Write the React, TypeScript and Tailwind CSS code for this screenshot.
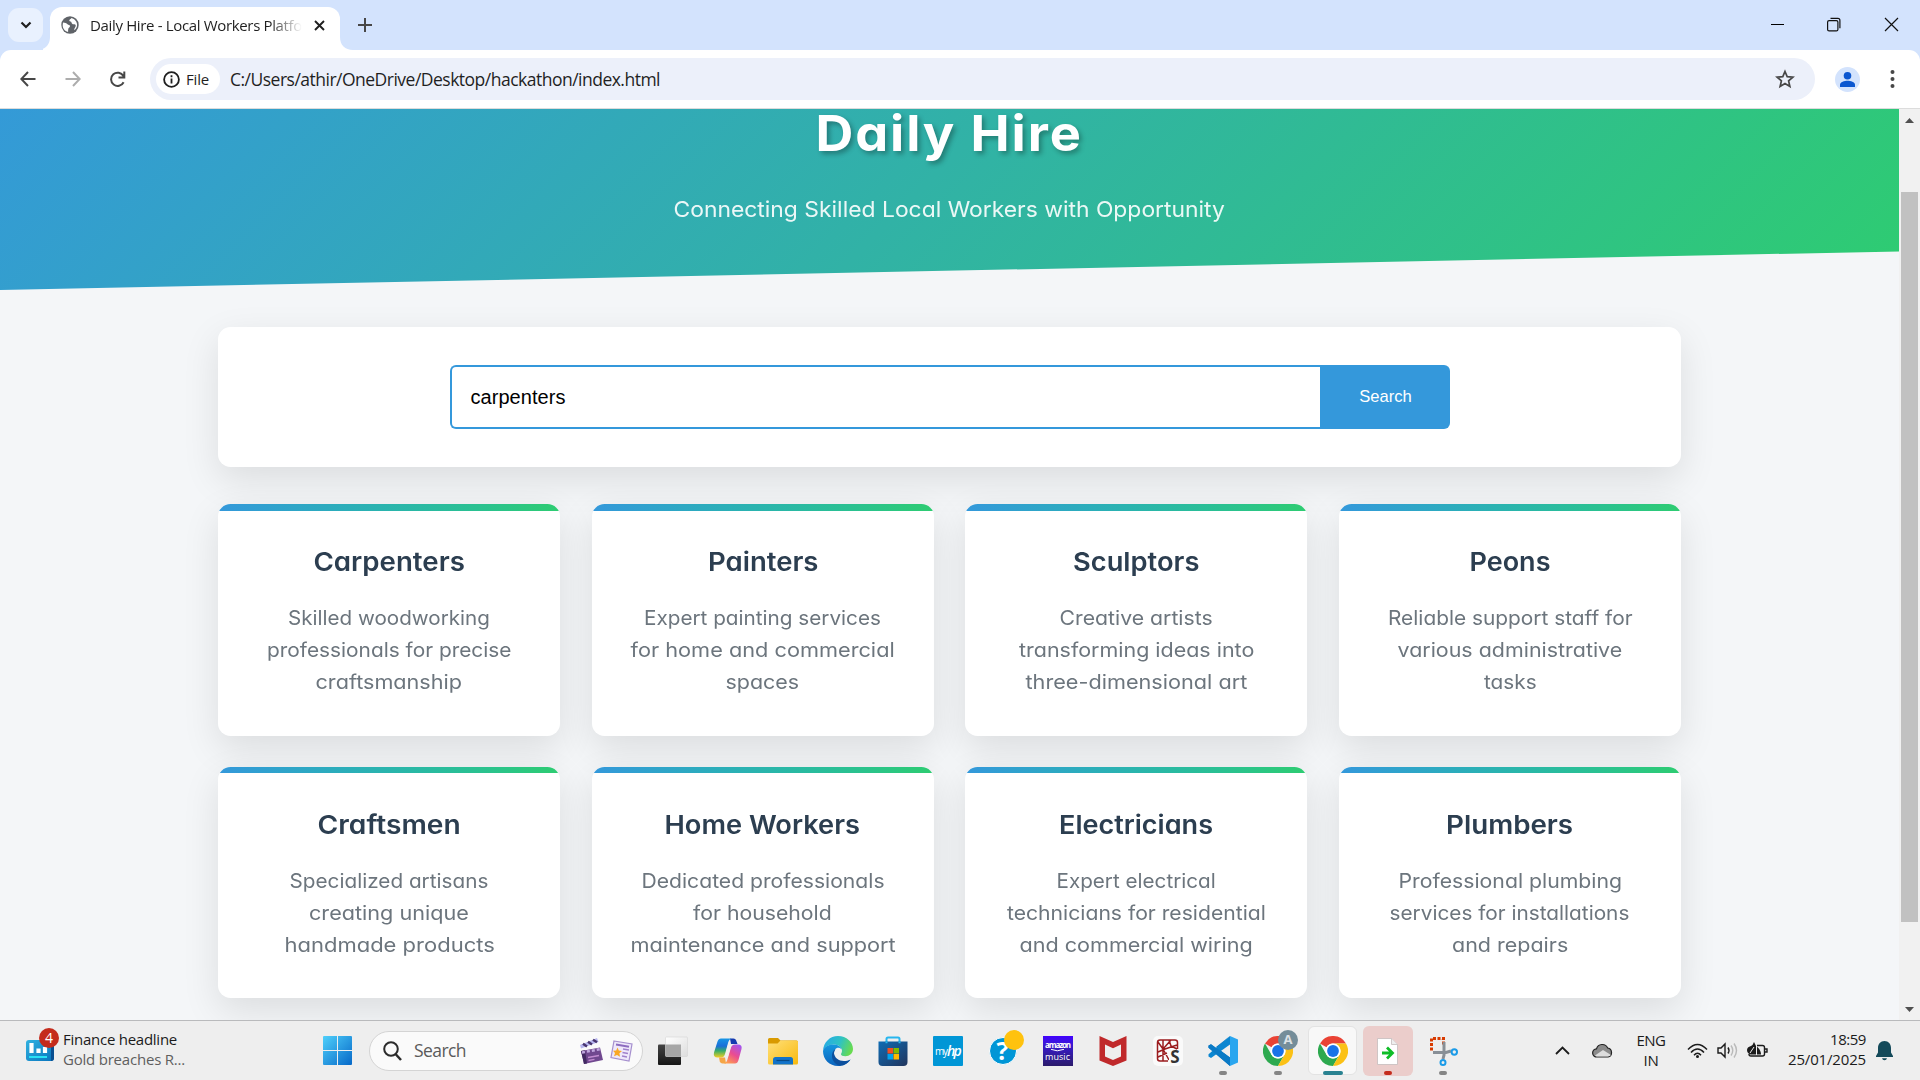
import { useLayoutEffect, useRef, useState, type ReactNode } from "react";

/** A single line of text tracked so that it spans the given width. */
function Fit({ w, children, className = "" }: { w: number; children: string; className?: string }) {
  const ref = useRef<HTMLSpanElement>(null);
  const [spacing, setSpacing] = useState(0);
  useLayoutEffect(() => {
    if (!ref.current) return;
    const natural = ref.current.getBoundingClientRect().width - spacing * children.length;
    setSpacing((w - natural) / children.length);
  }, [w, children]);
  return (
    <span ref={ref} className={`inline-block whitespace-nowrap ${className}`} style={{ letterSpacing: `${spacing}px` }}>
      {children}
    </span>
  );
}

/** A single line of text whose letters are widened so that it spans the given width. */
function Stretch({ w, children, className = "" }: { w: number; children: string; className?: string }) {
  const ref = useRef<HTMLSpanElement>(null);
  const [scale, setScale] = useState(1);
  useLayoutEffect(() => {
    if (ref.current) setScale(w / ref.current.offsetWidth);
  }, [w, children]);
  return (
    <span ref={ref} className={`inline-block whitespace-nowrap ${className}`} style={{ transform: `scaleX(${scale})` }}>
      {children}
    </span>
  );
}

type Line = [string, number];
const services: { title: Line; lines: Line[] }[] = [
  { title: ["Carpenters", 151], lines: [["Skilled woodworking", 202], ["professionals for precise", 245], ["craftsmanship", 147]] },
  { title: ["Painters", 110], lines: [["Expert painting services", 237], ["for home and commercial", 264], ["spaces", 74]] },
  { title: ["Sculptors", 126], lines: [["Creative artists", 153], ["transforming ideas into", 235], ["three-dimensional art", 222]] },
  { title: ["Peons", 81], lines: [["Reliable support staff for", 245], ["various administrative", 225], ["tasks", 53]] },
  { title: ["Craftsmen", 143], lines: [["Specialized artisans", 199], ["creating unique", 160], ["handmade products", 210]] },
  { title: ["Home Workers", 196], lines: [["Dedicated professionals", 243], ["for household", 139], ["maintenance and support", 265]] },
  { title: ["Electricians", 154], lines: [["Expert electrical", 159], ["technicians for residential", 259], ["and commercial wiring", 233]] },
  { title: ["Plumbers", 127], lines: [["Professional plumbing", 224], ["services for installations", 240], ["and repairs", 116]] },
];

function TabStrip() {
  return (
    <div className="flex h-[50px] shrink-0 bg-[#d3e3fd]">
      <div className="mt-2 ml-2 flex h-[34px] w-[35px] items-center justify-center rounded-[11px] bg-[#e9f1fe]">
        <svg width="12" height="8" viewBox="0 0 12 8" fill="none" stroke="#1f1f1f" strokeWidth="2.2"><path d="M1.500 1.500 6 6l4.500-4.500" /></svg>
      </div>
      <div className="flex w-[7px] items-end overflow-hidden">
        <svg className="-ml-[6px] shrink-0" width="13" height="13" viewBox="0 0 13 13"><path d="M13 0v13H0C8 13 13 8 13 0Z" fill="#fff" /></svg>
      </div>
      <div className="mt-[7px] flex h-[43px] w-[290px] items-center rounded-t-[12px] bg-white pb-[7px] pl-[11px]">
        <svg width="18" height="18" viewBox="0 0 18 18">
          <circle cx="9" cy="9" r="8.700" fill="#5f6368" />
          <path d="M2 6.500c2 .5 3.500.5 4.500 1.700.9 1 2.300.5 2.500 1.800.2 1.500-1.500 1.300-1.700 2.700-.1 1.200-.3 2.300-.2 3.300C3.500 15 1.500 12 1.700 9Z" fill="#fff" />
          <path d="M10.500 2c-.6 1.200-2.500 1.500-2.200 2.700.3 1 2 .6 2.200 1.700.2 1.200 1.300 2.100 2.700 1.800 1.100-.2 1.600.7 1.500 1.700-.2 1.700-1.700 2.300-1.500 4.300 1.700-1.200 2.900-3 2.900-5.200 0-3.200-2.300-6.100-5.600-7Z" fill="#fff" />
        </svg>
        <div className="ml-[11px] w-[214px] bg-gradient-to-r from-[#1f1f1f] from-84% to-transparent to-99% bg-clip-text text-[15px] leading-5 text-transparent">
          <Fit w={212}>Daily Hire - Local Workers Platfo</Fit>
        </div>
        <svg className="ml-[10px]" width="11" height="11" viewBox="0 0 11 11" stroke="#1f1f1f" strokeWidth="1.900"><path d="m1 1 9 9M10 1l-9 9" /></svg>
      </div>
      <div className="flex w-[14px] items-end">
        <svg width="13" height="13" viewBox="0 0 13 13"><path d="M0 0v13h13C5 13 0 8 0 0Z" fill="#fff" /></svg>
      </div>
      <svg className="mt-[18px] ml-1" width="14" height="14" viewBox="0 0 14 14" stroke="#474747" strokeWidth="2"><path d="M7 0v14M0 7h14" /></svg>
      <div className="mt-[17px] mr-[21px] ml-auto flex gap-[43px]">
        <svg width="14" height="15" viewBox="0 0 14 15" stroke="#000"><path d="M1 7.500h13" /></svg>
        <svg width="14" height="15" viewBox="0 0 14 15" fill="none" stroke="#111" strokeWidth="1.200"><rect x=".6" y="3.600" width="10.300" height="10.300" rx="1.500" /><path d="M3.500 1.400h7.400q2 0 2 2v7.800" /></svg>
        <svg width="15" height="15" viewBox="0 0 15 15" stroke="#111" strokeWidth="1.200"><path d="m1 1 13 13M14 1 1 14" /></svg>
      </div>
    </div>
  );
}

function Toolbar() {
  return (
    <div className="h-[59px] shrink-0 bg-[#d3e3fd]">
      <div className="flex h-full items-center rounded-t-[11px] border-b border-[#dcdcdc] bg-white pl-5">
        <svg width="16" height="16" viewBox="0 0 16 16" fill="none" stroke="#474747" strokeWidth="2"><path d="M15.500 8H1.500M8 1 1.300 8 8 15" /></svg>
        <svg className="ml-[29px]" width="16" height="16" viewBox="0 0 16 16" fill="none" stroke="#adadad" strokeWidth="2"><path d="M.5 8h14M8 1l6.700 7L8 15" /></svg>
        <svg className="ml-7" width="17" height="17" viewBox="0 0 17 17" fill="none" stroke="#474747" strokeWidth="2"><path d="M14.600 11.200A6.600 6.600 0 1 1 14.400 5M15.300.5v6H9.500" /></svg>
        <div className="ml-6 flex h-[42px] w-[1665px] items-center rounded-full bg-[#ecf0fa] pl-[6px]">
          <div className="flex h-[30px] w-16 items-center rounded-full bg-white pl-[7px]">
            <svg width="17" height="17" viewBox="0 0 17 17" fill="none" stroke="#1f1f1f" strokeWidth="1.800"><circle cx="8.500" cy="8.500" r="7.400" /><path d="M8.500 7.500v5M8.500 4.300v2" /></svg>
            <span className="ml-[6px] pb-px text-[15px] leading-5 text-[#1f1f1f]"><Fit w={23}>File</Fit></span>
          </div>
          <span className="ml-[10px] text-[17.500px] leading-6 text-[#1f1f1f]"><Fit w={430}>C:/Users/athir/OneDrive/Desktop/hackathon/index.html</Fit></span>
          <svg className="mr-5 ml-auto" width="20" height="20" viewBox="0 0 20 20" fill="none" stroke="#474747" strokeWidth="1.700"><path d="m10 2.500 2.200 5.200 5.700.5-4.300 3.700 1.300 5.600-4.900-3-4.900 3 1.300-5.600L2.100 8.200l5.700-.5Z" /></svg>
        </div>
        <svg className="ml-5" width="25" height="25" viewBox="0 0 25 25"><circle cx="12.500" cy="12.500" r="12.500" fill="#d3e3fd" /><circle cx="12.500" cy="8.800" r="3.800" fill="#0b57d0" /><path d="M5 20v-2.300c0-2.700 4.500-4 7.500-4s7.500 1.300 7.500 4V20Z" fill="#0b57d0" /></svg>
        <svg className="ml-[30px]" width="5" height="18" viewBox="0 0 5 18" fill="#474747"><circle cx="2.500" cy="2" r="2" /><circle cx="2.500" cy="9" r="2" /><circle cx="2.500" cy="16" r="2" /></svg>
      </div>
    </div>
  );
}

function Page() {
  return (
    <div className="flex h-[911px] shrink-0 overflow-hidden bg-[#f4f6f8]">
      <div className="w-[1899px] [font-family:Inter,sans-serif] [font-feature-settings:'cv11']">
        <header className="-mt-[76px] flex h-[257px] flex-col items-center bg-[linear-gradient(135deg,#3498db,#2ecc71)] pt-[76px] text-white [clip-path:polygon(0_0,100%_0,100%_85%,0_100%)]">
          <h1 className="text-[49px] leading-[50px] font-bold [text-shadow:2.5px_2.5px_5px_rgba(0,0,0,0.3)]"><Stretch w={267} className="tracking-[1.800px]">Daily Hire</Stretch></h1>
          <p className="mt-[33px] text-[22px] leading-[35px] text-white/90"><Stretch w={551}>Connecting Skilled Local Workers with Opportunity</Stretch></p>
        </header>
        <main className="mx-auto w-[1463px] pt-[37px]">
          <section className="flex h-[140px] items-center justify-center rounded-[12.500px] bg-white shadow-[0_12.5px_37.5px_rgba(0,0,0,0.1)]">
            <div className="flex h-16 w-[1000px] font-['Liberation_Sans',sans-serif]">
              <div className="flex w-[870px] items-center rounded-l-[6px] border-2 border-r-0 border-[#3498db] pl-[19px] text-[20px] text-black"><Fit w={95}>carpenters</Fit></div>
              <div className="flex w-[130px] items-center justify-center rounded-r-[6px] bg-[#3498db] pl-[2px] text-[16.600px] text-white">Search</div>
            </div>
          </section>
          <section className="mt-[37.300px] grid grid-cols-4 gap-[31.250px]">
            {services.map(({ title, lines }) => (
              <article key={title[0]} className="flex h-[231.400px] flex-col items-center overflow-hidden rounded-[12.500px] bg-white shadow-[0_12.5px_37.5px_rgba(0,0,0,0.1)]">
                <div className="h-[6.250px] w-full shrink-0 bg-linear-to-r from-[#3498db] to-[#2ecc71]" />
                <h3 className="mt-[30.500px] text-[26px] leading-[41.600px] font-semibold text-[#2c3e50]"><Stretch w={title[1]}>{title[0]}</Stretch></h3>
                <p className="mt-[19.500px] flex flex-col items-center text-[20px] leading-8 text-[#6c757d]">
                  {lines.map(([text, w]) => <Stretch key={text} w={w}>{text}</Stretch>)}
                </p>
              </article>
            ))}
          </section>
        </main>
      </div>
      <div className="flex w-[21px] flex-col items-center bg-[#f1f1f1] pt-[9px]">
        <svg className="shrink-0" width="9" height="5" viewBox="0 0 9 5"><path d="M4.500 0 9 5H0Z" fill="#505050" /></svg>
        <div className="mt-[69px] h-[730px] w-[17px] shrink-0 bg-[#c1c1c1]" />
        <svg className="mt-[85px] shrink-0" width="9" height="5" viewBox="0 0 9 5"><path d="M0 0h9L4.500 5Z" fill="#505050" /></svg>
      </div>
    </div>
  );
}

function Chrome() {
  return (
    <svg width="30" height="30" viewBox="0 0 30 30">
      <path d="M2 7.500A15 15 0 0 1 28 7.500H15A7.500 7.500 0 0 0 8.500 11.200Z" fill="#ea4335" />
      <path d="M2 7.500A15 15 0 0 0 15 30l6.500-11.200a7.500 7.500 0 0 1-13 0Z" fill="#2da94f" />
      <path d="M28 7.500A15 15 0 0 1 15 30l6.500-11.200A7.500 7.500 0 0 0 15 7.500Z" fill="#fbc116" />
      <circle cx="15" cy="15" r="7.500" fill="#fff" />
      <circle cx="15" cy="15" r="5.900" fill="#1a73e8" />
    </svg>
  );
}

function TaskView() {
  return (
    <svg width="30" height="30" viewBox="0 0 30 30">
      <defs>
        <linearGradient id="tvDark" x2="0" y2="1"><stop stopColor="#444" /><stop offset="1" stopColor="#161616" /></linearGradient>
        <linearGradient id="tvLight" x2="1" y2="1"><stop stopColor="#fff" /><stop offset="1" stopColor="#ddd" /></linearGradient>
      </defs>
      <rect y="8.500" width="23" height="20.500" rx="1" fill="url(#tvDark)" />
      <rect x="7.500" y="1" width="22" height="19.500" rx="1" fill="url(#tvLight)" stroke="#d5d5d5" strokeWidth=".6" />
      <path d="M7.500 8.500H23v12H8.500q-1 0-1-1Z" fill="#a6a6a6" />
    </svg>
  );
}

function Copilot() {
  return (
    <svg width="30" height="28" viewBox="0 0 30 28">
      <defs>
        <linearGradient id="cpA" x2="0" y2="1"><stop stopColor="#1796e6" /><stop offset=".4" stopColor="#1b6fd8" /><stop offset=".65" stopColor="#38ad68" /><stop offset="1" stopColor="#f4cf22" /></linearGradient>
        <linearGradient id="cpB" x1=".8" y1="0" x2=".2" y2="1"><stop stopColor="#a555ee" /><stop offset=".5" stopColor="#ea4c91" /><stop offset="1" stopColor="#ffa14c" /></linearGradient>
      </defs>
      <path d="M17 1.500h3.500q2 0 2.700 2L24.500 7H18Z" fill="#143bb0" />
      <path d="M8 1.500h10q-2 1-2.700 3.500L12 17q-1 3.500-4 3.500H4.500Q0 20.500 1 15.500L4.500 4.500Q5.500 1.500 8 1.500Z" fill="url(#cpA)" />
      <path d="M13 26.500H9.500q-2 0-2.700-2L6 20.500h6Z" fill="#f5a646" />
      <path d="M22 26.500H11q2.500-.5 3.300-3.500L18 10.500Q19 7.500 22 7.500h3q4.500 0 3.500 4.500L25.500 23q-1 3.500-3.500 3.500Z" fill="url(#cpB)" />
      <path d="M14.700 8.500h3.500L15 19.500h-3Z" fill="#f6f0ed" />
    </svg>
  );
}

function Folder() {
  return (
    <svg width="30" height="28" viewBox="0 0 30 28">
      <defs><linearGradient id="fo" x2="1" y2="1"><stop stopColor="#ffe07a" /><stop offset="1" stopColor="#f8b90d" /></linearGradient></defs>
      <path d="M0 2.500Q0 1 1.500 1h8.500l2.500 2.500H28.500Q30 3.500 30 5v8H0Z" fill="#d99a00" />
      <path d="M0 6.500h9.500l3-3h16Q30 3.500 30 5v21q0 1.500-1.500 1.500h-27Q0 27.500 0 26Z" fill="url(#fo)" />
      <path d="M5 27.500V22.500Q5 20 7.500 20h15Q25 20 25 22.500v5Z" fill="#1273c9" />
      <path d="M8.500 23.500h13" stroke="#084a86" strokeWidth="1.200" />
    </svg>
  );
}

function Edge() {
  return (
    <svg width="30" height="30" viewBox="0 0 30 30">
      <defs>
        <linearGradient id="edA" x2="1" y1=".2" y2=".5"><stop stopColor="#25a9e8" /><stop offset=".55" stopColor="#2fc2c3" /><stop offset="1" stopColor="#68db50" /></linearGradient>
        <linearGradient id="edB" x2="0" y2="1"><stop stopColor="#1597df" /><stop offset="1" stopColor="#0b63bd" /></linearGradient>
      </defs>
      <path d="M0 15C.5 6 7 0 15 0c8.500 0 15 6 15 13 0 4.500-3.500 7.200-7.500 7.200-3 0-4.500-1-4.500-2 0-.8 1-1.400 1-3.400C19 11 15 8.500 10.500 8.500 5 8.500 1 11.500 0 15Z" fill="url(#edA)" />
      <path d="M0 15C1 11 5 8.500 10.500 8.500c4 0 7.500 2 8.300 5-1-1.300-2.300-1.800-3.500-1.800-2.800 0-4.300 2.700-4.300 5.800 0 5.500 4.500 8.500 9 8.500 3 0 5.500-1 7.500-2.500C24.500 28 20 30 15 30 6.500 30 0 23.500 0 15Z" fill="url(#edB)" />
      <path d="M12.500 13.200C9.500 14.500 9 18 9 20c0 5.500 4.500 9 8 9.800 4.500-.3 8.500-3 10.500-6.300-2 1-4.500 1.500-6.500 1.500-5.500 0-9.500-3.500-10-7.500 0-1.800.5-3.200 1.500-4.300Z" fill="#0c4f9d" />
    </svg>
  );
}

function Store() {
  return (
    <svg width="30" height="30" viewBox="0 0 30 30">
      <defs><linearGradient id="st" x2="1" y2="1"><stop stopColor="#0f6cb4" /><stop offset="1" stopColor="#22355d" /></linearGradient></defs>
      <path d="M8.500 7V3q0-1.500 1.500-1.500h10q1.500 0 1.500 1.500v4" fill="none" stroke="#27b6ee" strokeWidth="2" />
      <path d="M.5 5.500h29V26q0 4-4 4h-21q-4 0-4-4Z" fill="url(#st)" />
      <path d="M9.500 12H15v5.500H9.500Z" fill="#f25022" /><path d="M15.500 12H21v5.500h-5.500Z" fill="#7fba00" />
      <path d="M9.500 18H15v5.500H9.500Z" fill="#00a4ef" /><path d="M15.500 18H21v5.500h-5.500Z" fill="#ffb900" />
      <path d="M8.500 5.500v1.800M21.500 5.500v1.800" stroke="#27b6ee" strokeWidth="2" />
    </svg>
  );
}

function Badge({ children, className }: { children?: ReactNode; className: string }) {
  return <span className={`absolute flex size-5 items-center justify-center rounded-full text-[13px] leading-none ${className}`}>{children}</span>;
}

function Cell({ children, mark }: { children: ReactNode; mark?: string }) {
  return (
    <div className="relative flex h-[60px] w-[55px] items-center justify-center">
      {children}
      {mark && <span className={`absolute bottom-[6px] h-1 rounded-full ${mark}`} />}
    </div>
  );
}

function Apps() {
  return (
    <div className="ml-[2px] flex">
      <Cell><TaskView /></Cell>
      <Cell><Copilot /></Cell>
      <Cell><Folder /></Cell>
      <Cell><Edge /></Cell>
      <Cell><Store /></Cell>
      <Cell>
        <div className="flex size-[30px] items-center justify-center rounded-[1px] bg-[#0096d6] text-white">
          <span className="text-[10px] leading-none"><Fit w={12}>my</Fit></span>
          <span className="text-[14px] leading-none font-semibold italic"><Fit w={13}>hp</Fit></span>
        </div>
      </Cell>
      <Cell>
        <div className="flex size-7 items-center justify-center rounded-full border border-white bg-[#0096d6] text-[25px] leading-none font-bold text-white">?</div>
        <Badge className="top-[9px] left-[29px] bg-[#ffc20e]" />
      </Cell>
      <Cell>
        <div className="flex size-[30px] flex-col items-center bg-linear-to-b from-[#4100ff] to-[#2b1a6b] pt-1 text-white">
          <span className="text-[8px] leading-[9px] font-bold"><Fit w={25}>amazon</Fit></span>
          <svg width="16" height="3" viewBox="0 0 16 3" fill="none" stroke="#fff"><path d="M1 .3q6 3 13 0" /></svg>
          <span className="text-[9px] leading-[9px]"><Fit w={25}>music</Fit></span>
        </div>
      </Cell>
      <Cell>
        <svg width="28" height="30" viewBox="0 0 28 30"><path d="m.5 0 13.500 6L27.500 0v24.500L14 30 .5 24.500Z" fill="#c0292b" /><path d="m6 8.500 8 3.700 8-3.700v12L14 24l-8-3.500Z" fill="#eee" /></svg>
      </Cell>
      <Cell>
        <div className="relative size-[30px] rounded-[5px] bg-[#fafafa]">
          <svg width="30" height="30" viewBox="0 0 30 30" fill="none" stroke="#9b1c1f" strokeWidth="1.500"><path d="M15 25H7q-2.500 0-2.500-2.500V6.500Q4.500 4 7 4h15q2.500 0 2.500 2.500V13M10 4v21M5 6l5 7 8-9M5 16l7-3 12-4M10 13l6 11M5 21l9-4M16 4l2 6 6 3" /></svg>
          <span className="absolute right-[3px] bottom-[3px] bg-[#fafafa] pl-px text-[17px] leading-[13px] font-bold text-[#333]">S</span>
        </div>
      </Cell>
      <Cell mark="w-2 bg-[#858585]">
        <svg width="30" height="30" viewBox="0 0 30 30">
          <path d="M22 0 8.500 12.500 3 8.300.5 9.600v2.200L22 30v-8.500L8 11Z" fill="#0873bd" />
          <path d="M.5 18.300 22 0v8.500L3 22 .5 20.400Z" fill="#0b86d1" />
          <path d="m.5 9.700 2.500-1.500L22 21.500V30L.5 11.700Z" fill="#0a7ac6" />
          <path d="M22 0 30 3.500v23L22 30Z" fill="#2aa6ef" />
        </svg>
      </Cell>
      <Cell mark="w-2 bg-[#858585]"><Chrome /><Badge className="top-[9px] left-[28px] bg-[#748d99] font-bold text-[#dce2e6]">A</Badge></Cell>
      <Cell mark="w-5 bg-[#2a8291]">
        <div className="flex size-[49px] items-center justify-center rounded-[6px] border border-[#e3e3e3] bg-[#f8f8f8]"><Chrome /></div>
      </Cell>
      <Cell mark="w-2 bg-[#c42b1c]">
        <div className="flex size-[50px] items-center justify-center rounded-[6px] bg-[#ebcdcb] pt-[2px]">
          <svg width="21" height="27" viewBox="0 0 21 27"><path d="M.5.500h14l6 6v20H.5Z" fill="#fff" stroke="#c5bcbc" strokeWidth=".8" /><path d="M14.500.500v6h6" fill="#eee" stroke="#c5bcbc" strokeWidth=".8" /><path d="M5 15h9M10 9.500l5.500 5.500L10 20.500" fill="none" stroke="#0fbd27" strokeWidth="2.800" /></svg>
        </div>
      </Cell>
      <Cell mark="w-2 bg-[#858585]">
        <svg width="30" height="30" viewBox="0 0 30 30" fill="none">
          <path d="M14.500 3.700v-.2M3.500 14.500v-12h12v6" stroke="#d83b01" strokeWidth="3" strokeDasharray="3 1.500" />
          <path d="M5 16.500h13l5-1.500M16 6v13l-1 4" stroke="#888f96" strokeWidth="3" />
          <circle cx="26.300" cy="16" r="2.700" stroke="#1b9be8" strokeWidth="2" /><circle cx="15" cy="26.500" r="2.500" stroke="#1b9be8" strokeWidth="2" />
        </svg>
      </Cell>
    </div>
  );
}

function Taskbar() {
  return (
    <div className="flex h-[60px] shrink-0 items-center border-t border-[#b9babc] bg-[#eee] pl-[26px] text-[#1b1b1b]">
      <div className="relative">
        <svg width="28" height="21" viewBox="0 0 28 21">
          <defs><linearGradient id="wi" x2="1" y2="1"><stop stopColor="#31b2e0" /><stop offset="1" stopColor="#0873bd" /></linearGradient></defs>
          <rect width="28" height="21" rx="3" fill="url(#wi)" /><path d="M25 0h1q2 0 2 3v15q0 3-3 3Z" fill="#084f91" />
          <path d="M5.500 3v10M12.500 8.500V13M19 7v6" stroke="#fff" strokeWidth="4.200" /><path d="M3 17h18" stroke="#28e1f5" strokeWidth="2" />
        </svg>
        <Badge className="-top-[12px] left-[13px] bg-[#c42b1c] text-[14px] text-white">4</Badge>
      </div>
      <div className="ml-[9px] flex w-[260px] flex-col pb-1 text-[15px] leading-5">
        <Fit w={114} className="self-start">Finance headline</Fit>
        <Fit w={122} className="self-start text-[#5f5f5f]">Gold breaches R...</Fit>
      </div>
      <svg width="29" height="29" viewBox="0 0 29 29">
        <defs><linearGradient id="win" gradientUnits="userSpaceOnUse" x1="0" y1="0" x2="29" y2="29"><stop stopColor="#4fd0fb" /><stop offset="1" stopColor="#0668c8" /></linearGradient></defs>
        <path d="M1 0h13v14H0V1Q0 0 1 0ZM15 0h13q1 0 1 1v13H15ZM0 15h14v14H1q-1 0-1-1ZM15 15h14v13q0 1-1 1H15Z" fill="url(#win)" />
      </svg>
      <div className="ml-[17px] flex h-10 w-[274px] items-center rounded-full border border-[#d4d4d4] bg-[#fafafa] pl-[13px]">
        <svg width="19" height="20" viewBox="0 0 19 20" fill="none" stroke="#2b2b2b" strokeWidth="2"><circle cx="8" cy="8" r="6.800" /><path d="m12.500 13 5.500 6" strokeWidth="2.500" /></svg>
        <span className="ml-3 pb-px text-[17.500px] leading-6 text-[#5a5a5a]"><Fit w={52}>Search</Fit></span>
        <svg className="ml-[113px]" width="25" height="28" viewBox="0 0 25 28">
          <path d="m2 14 19-3.500 3 12.500L5 27Z" fill="#70488f" /><path d="m2 14 3 13 3-.6L6 13.300Z" fill="#422a62" />
          <path d="M1 8 18 1l1.500 4L2 11.500Z" fill="#b8b6ef" /><path d="m4 6.800 4 2.800M9 4.700l4 2.800M14 2.700l4 2.600" stroke="#49366f" strokeWidth="2.500" />
          <path d="m3 15.500 18-3.300" stroke="#c1a7df" strokeWidth="2.500" strokeDasharray="3 2" /><path d="m9 20.500 11-2M9.500 23.500l6-1.200" stroke="#c28cd1" strokeWidth="1.300" />
        </svg>
        <svg className="ml-[6px]" width="23" height="22" viewBox="0 0 23 22">
          <path d="M4 1 22 4l-3 17L1 17.500Z" fill="#eee8fa" stroke="#a58fce" strokeWidth="1.200" /><path d="m6 4.500 13 2.200" stroke="#8d6cbf" strokeWidth="2" />
          <path d="m13 9 6 1M12.500 12.500l5.500 1M12 16l5 1" stroke="#a080cb" strokeWidth="1.400" /><path d="m7.500 7.500 1.300 3 3.200.6-2.600 2.200.6 3.400-3-1.700-3 1.300 1-3.200L3 10.800l3.200-.3Z" fill="#f9a825" />
        </svg>
      </div>
      <Apps />
      <svg className="ml-[85px]" width="15" height="9" viewBox="0 0 15 9" fill="none" stroke="#1b1b1b" strokeWidth="1.800"><path d="m1 8 6.500-6.500L14 8" /></svg>
      <svg className="ml-[22px]" width="21" height="15" viewBox="0 0 21 15"><path d="M5 14a4 4 0 0 1-.5-8.200A6 6 0 0 1 15.700 5 4.600 4.600 0 0 1 16 14Z" fill="#8b8b8b" stroke="#222" strokeWidth="1.200" /><path d="M3 12.500 11 7l8 5q-1 1.400-3 1.400H5q-1.500 0-2-.9Z" fill="#ddd" /></svg>
      <div className="ml-[21px] flex w-[34px] flex-col items-center pb-[2px] text-[15px] leading-5"><Fit w={29}>ENG</Fit><Fit w={15}>IN</Fit></div>
      <svg className="ml-[19px]" width="21" height="16" viewBox="0 0 21 16" fill="none" stroke="#1b1b1b" strokeWidth="1.500"><path d="M1 6.500Q10.500-3.500 20 6.500M4 9.500q6.500-7 13 0M7 12.200q3.500-3.800 7 0" /><circle cx="10.500" cy="13.500" r="1.500" fill="#1b1b1b" stroke="none" /></svg>
      <svg className="ml-[9px]" width="21" height="17" viewBox="0 0 21 17" fill="none" stroke="#1b1b1b" strokeWidth="1.400"><path d="M1 6h3l4-4v13L4 11H1Z" /><path d="M11 5.500q2 3 0 6" /><path d="M14 3.500q3.500 5 0 10M17 1.500q5 7 0 14" stroke="#b9b9b9" /></svg>
      <svg className="ml-[9px]" width="21" height="17" viewBox="0 0 21 17"><path d="M10 3.500h5.500q2 0 2 2v6.500q0 2-2 2H4q-2 0-2-2M17.500 7H20v3h-2.500" fill="none" stroke="#1b1b1b" strokeWidth="1.400" /><path d="M7 0 9 4v8.500H3.500Q0 11 0 8q0-3 4-4Q6 3 7 0ZM10 12.500h4q0-4-4-8Z" fill="#1b1b1b" /><path d="m3 11 4-6" stroke="#eee" /></svg>
      <div className="ml-5 flex w-[78px] flex-col items-end pb-[3px] text-[15px] leading-5"><Fit w={36}>18:59</Fit><Fit w={78}>25/01/2025</Fit></div>
      <svg className="ml-[10px]" width="17" height="20" viewBox="0 0 17 20" fill="#144a5a"><path d="M8.500 0C12.500 0 15 3 15 7v4.500l2 3.500v1H0v-1l2-3.500V7c0-4 2.500-7 6.500-7ZM6 17.300h5q-.5 1.900-2.500 1.900T6 17.300Z" /></svg>
    </div>
  );
}

export default function App() {
  return (
    <div className="flex h-[1080px] w-[1920px] flex-col overflow-hidden font-['Open_Sans',sans-serif]">
      <TabStrip />
      <Toolbar />
      <Page />
      <Taskbar />
    </div>
  );
}
